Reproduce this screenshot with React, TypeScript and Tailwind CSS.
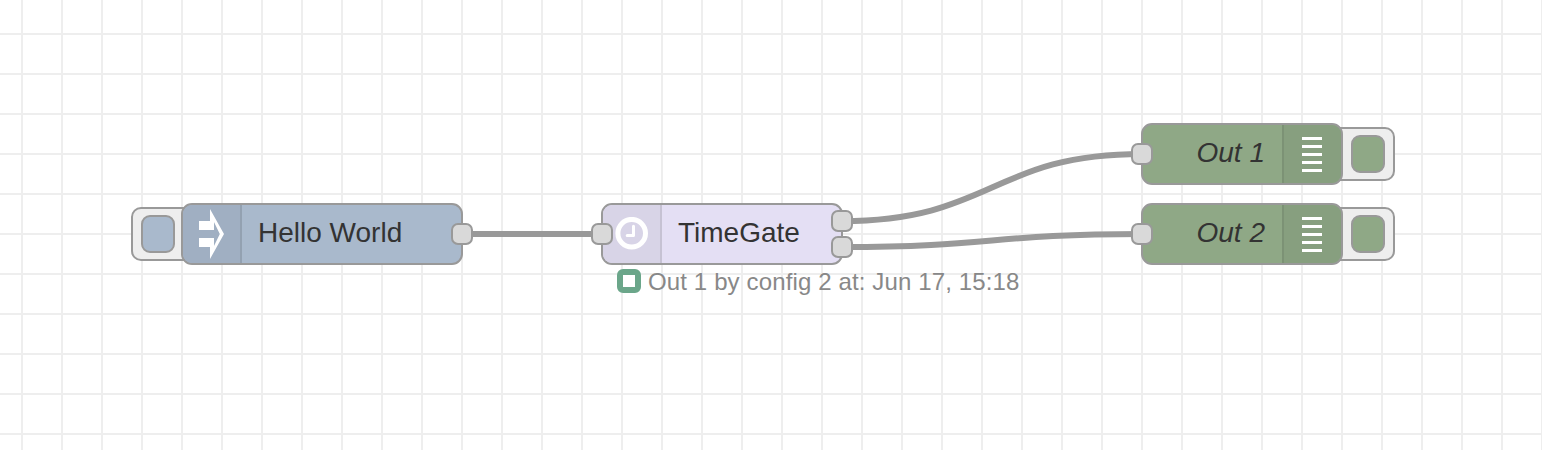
import React from "react";

const FONT = "font-['Liberation_Sans',Arial,sans-serif]";

function Port({ className }: { className: string }) {
  return <span className={`absolute size-[22px] rounded-[7px] border-2 border-[#999] bg-[#d9d9d9] ${className}`} />;
}

function NodeButton({ className, fill }: { className: string; fill: string }) {
  return (
    <div className={`absolute flex h-[54px] w-[66px] items-center rounded-[10px] border-2 border-[#999] bg-[#eee] px-2 ${className}`}>
      <span className={`h-[38px] w-[34px] rounded-[9px] border-2 border-[#999] ${fill}`} />
    </div>
  );
}

function InjectIcon() {
  return (
    <svg className="h-[60px] w-[34px]" viewBox="0 0 34 60" fill="#fff">
      <path d="M5 17H20V26H5ZM5 34H20V43H5Z" />
      <path d="M16 5L30 30L16 55V43H19.5L25.8 30L19.5 17H16Z" />
    </svg>
  );
}

function ClockIcon() {
  return (
    <svg className="size-[34px]" viewBox="0 0 34 34" fill="none" stroke="#fff">
      <circle cx="16.7" cy="16.2" r="13.8" strokeWidth="5" />
      <path d="M18.5 9.2V18.5H12.2" strokeWidth="3" strokeLinecap="round" strokeLinejoin="round" />
    </svg>
  );
}

function DebugNode({ label, className }: { label: string; className: string }) {
  return (
    <div className={`absolute h-[62px] w-[254px] ${className}`}>
      <NodeButton className="right-0 top-1 justify-end" fill="bg-[#8fa886]" />
      <div className="relative flex h-full w-[202px] overflow-hidden rounded-[11px] border-2 border-[#999] bg-[#8fa886]">
        <div className="flex flex-1 items-center justify-end pb-0.5 pr-[17px] text-[28px] italic leading-none text-[#333]">{label}</div>
        <div className="flex w-[59px] flex-col items-center justify-center gap-[5px] border-l-2 border-[#7c9275] bg-[#879f7f] pr-px">
          {[0, 1, 2, 3, 4].map((i) => (
            <span key={i} className="h-[3px] w-5 bg-white" />
          ))}
        </div>
      </div>
      <Port className="-left-[10px] top-5" />
    </div>
  );
}

export default function App() {
  return (
    <main className={`relative h-[450px] w-[1542px] overflow-hidden bg-white ${FONT}`}>
      <svg className="absolute inset-0 h-full w-full" fill="none">
        <defs>
          <pattern id="grid" x="21" y="33" width="40" height="40" patternUnits="userSpaceOnUse">
            <path d="M0 1H40M1 0V40" stroke="#eee" strokeWidth="2" />
          </pattern>
        </defs>
        <rect width="1542" height="450" fill="url(#grid)" />
        <g stroke="#999" strokeWidth="6">
          <path d="M462 234H602" />
          <path d="M842 221C992 221 992 154 1142 154" />
          <path d="M842 247C992 247 992 234 1142 234" />
        </g>
      </svg>

      <div className="absolute left-[131px] top-[203px] h-[62px] w-[332px]">
        <NodeButton className="left-0 top-1" fill="bg-[#a9b9cc]" />
        <div className="relative ml-[50px] flex h-full w-[282px] overflow-hidden rounded-[11px] border-2 border-[#999] bg-[#a9b9cc]">
          <div className="flex w-[59px] items-center border-r-2 border-[#93a1b1] bg-[#a0afc2] pl-[11px]">
            <InjectIcon />
          </div>
          <div className="flex items-center pb-0.5 pl-4 text-[28px] leading-none text-[#333]">Hello World</div>
        </div>
        <Port className="-right-[10px] top-5" />
      </div>

      <div className="absolute left-[601px] top-[203px] h-[62px] w-[242px]">
        <div className="flex h-full overflow-hidden rounded-[11px] border-2 border-[#999] bg-[#e4dff4]">
          <div className="flex w-[59px] items-center border-r-2 border-[#c6c2d3] bg-[#d8d4e7] pl-3">
            <ClockIcon />
          </div>
          <div className="flex items-center pb-0.5 pl-4 text-[28px] leading-none text-[#333]">TimeGate</div>
        </div>
        <Port className="-left-[10px] top-5" />
        <Port className="-right-[10px] top-[7px]" />
        <Port className="-right-[10px] top-[33px]" />
      </div>

      <div className="absolute left-[617px] top-[267px] flex h-7 items-center gap-[7px] whitespace-nowrap text-[24px] leading-none tracking-[0.13px] text-[#888]">
        <span className="size-6 rounded-[6px] border-[6px] border-[#6ba68a] bg-white" />
        <span className="pt-0.5">Out 1 by config 2 at: Jun 17, 15:18</span>
      </div>

      <DebugNode label="Out 1" className="left-[1141px] top-[123px]" />
      <DebugNode label="Out 2" className="left-[1141px] top-[203px]" />
    </main>
  );
}
